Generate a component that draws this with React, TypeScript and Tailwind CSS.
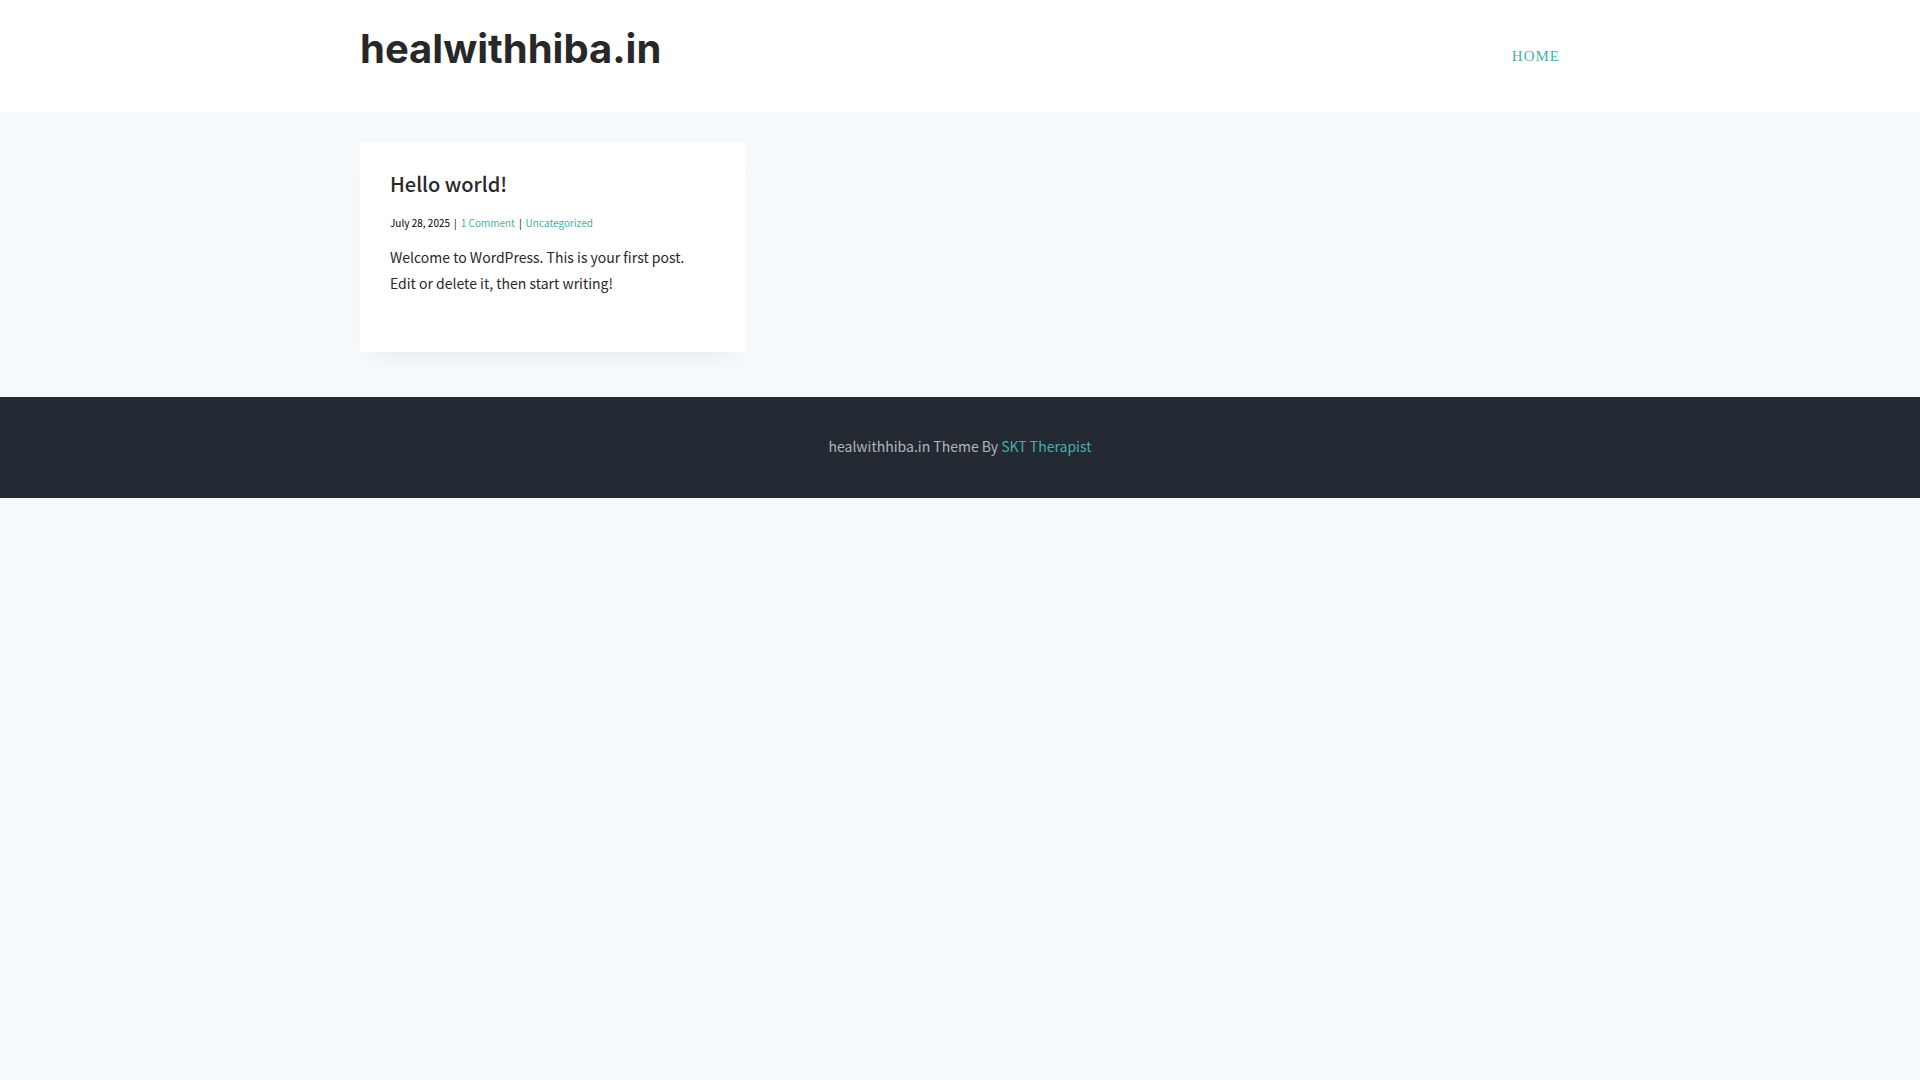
const posts = [
  {
    title: "Hello world!",
    date: "July 28, 2025",
    comments: "1 Comment",
    category: "Uncategorized",
    excerpt: "Welcome to WordPress. This is your first post. Edit or delete it, then start writing!",
  },
];

const Header = () => (
  <header className="bg-white">
    <div className="mx-auto flex h-28 max-w-[1200px] items-center justify-between">
      <h1 className="pb-[14px] font-['Inter',sans-serif] text-[40px] leading-[48px] font-bold text-[#282828]">
        <a href="#">healwithhiba.in</a>
      </h1>
      <nav className="font-['Liberation_Serif',serif] text-[15px] leading-6 tracking-[1px] uppercase">
        <a href="#" className="text-[#49aea7]">Home</a>
      </nav>
    </div>
  </header>
);

const Footer = () => (
  <footer className="bg-[#232a34] px-4 pt-[35px] pb-[38px] text-center text-sm leading-7 text-[#b4b4b4]">
    healwithhiba.in Theme By <a href="#" className="text-[#49aea7]">SKT Therapist</a>
  </footer>
);

const App = () => {
  return (
    <div className="min-h-screen bg-[#f6fafd] font-['Noto_Sans_CJK_SC',sans-serif] text-[#282828]">
      <Header />
      <main className="mx-auto grid max-w-[1200px] grid-cols-3 gap-[22px] pt-[30px] pb-[45px]">
        {posts.map((post) => (
          <article key={post.title} className="bg-white px-[30px] pt-[27px] pb-14 shadow-[0_15px_20px_-10px_rgba(0,0,0,0.06)]">
            <h2 className="text-xl leading-[30px] font-medium">
              <a href="#">{post.title}</a>
            </h2>
            <div className="mt-[13px] flex gap-1 text-[10px] leading-[22px] text-black">
              <span>{post.date}</span>
              <span>|</span>
              <a href="#" className="text-[#49aea7]">{post.comments}</a>
              <span>|</span>
              <a href="#" className="text-[#49aea7]">{post.category}</a>
            </div>
            <p className="mt-[10px] max-w-[300px] text-sm leading-[26px]">{post.excerpt}</p>
          </article>
        ))}
      </main>
      <Footer />
    </div>
  );
};

export default App;
